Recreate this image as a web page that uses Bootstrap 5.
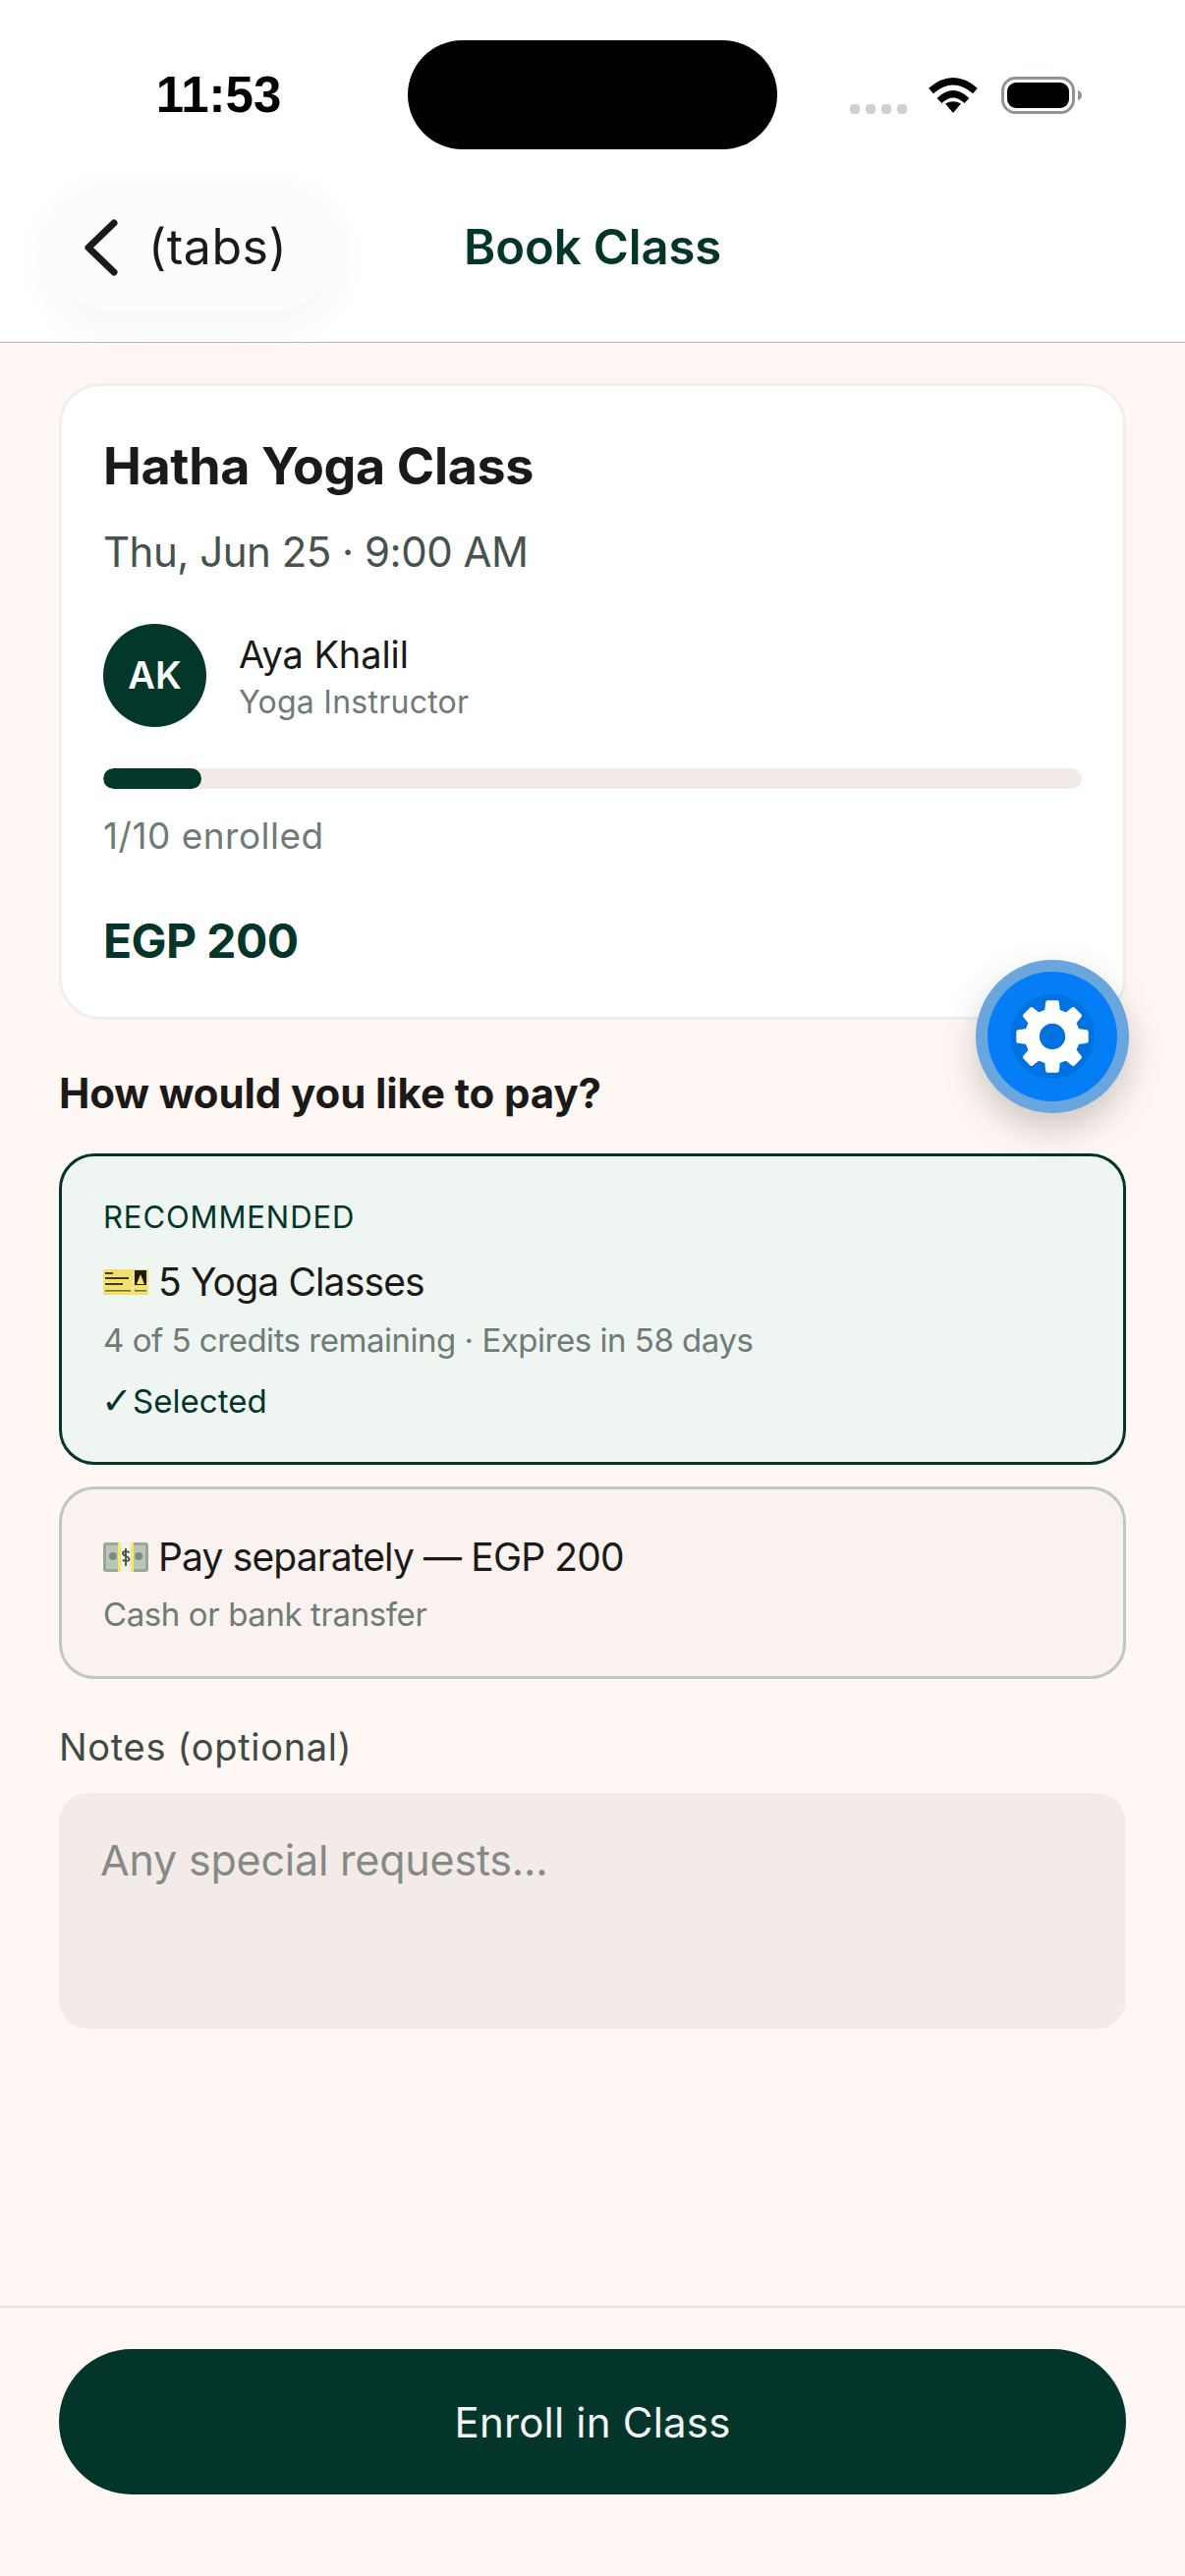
<!DOCTYPE html>
<html lang="en">
<head>
<meta charset="utf-8">
<title>Book Class</title>
<link href="https://cdn.jsdelivr.net/npm/bootstrap@5.3.0/dist/css/bootstrap.min.css" rel="stylesheet">
<style>
html,body{margin:0;width:1206px;height:2622px;overflow:hidden}
body{font-family:Inter,"Liberation Sans",sans-serif;background:#fef7f4;color:#1c1a18}
.screen{width:1206px;height:2622px;position:relative}
.top-head{background:#fff;height:349px;border-bottom:1px solid #b5b5b2}
.status-row{height:186px;padding-top:41px}
.clock{width:415px;padding-left:30px;text-align:center;font:700 51px/111px "Liberation Sans",sans-serif;color:#000}
.island{width:376px;height:111px;border-radius:56px;background:#000}
.status-icons{margin-left:74px;height:111px;padding-top:37px}
.dots{gap:6px;padding-top:28px;margin-right:22px}
.dots i{display:block;width:10px;height:10px;border-radius:4px;background:#cfd1cd}
.nav-row{height:131px}
.back-pill{width:295px;height:131px;margin-left:48px;border-radius:66px;background:#fcfcfc;box-shadow:0 14px 44px rgba(0,0,0,.045);padding-left:37px;gap:30px;font-size:50px;color:#1c1a18;letter-spacing:.5px}
.nav-title{margin-left:129px;font-size:49px;font-weight:600;color:#03352a;letter-spacing:-.1px}
.page-body{padding:41px 60px 0}
.info-card{background:#fff;border:3px solid #eef0ec;border-radius:42px;padding:49px 42px 47px}
.class-name{font-size:52px;line-height:66px;font-weight:700;letter-spacing:-.35px;margin:0}
.class-when{font-size:42px;line-height:56px;margin-top:26px;color:#46524d;letter-spacing:-.5px}
.avatar{width:105px;height:105px;border-radius:50%;background:#03372a;color:#fff;font-size:38px;font-weight:600}
.who{margin-top:45px;gap:33px}
.who-name{font-size:38px;line-height:50px;letter-spacing:-.1px}
.who-role{font-size:32px;line-height:44px;margin-top:2px;margin-bottom:-2px;color:#6f7b76;letter-spacing:.25px}
.seat-bar{height:21px;margin-top:42px;background:#f3ebe8;border-radius:11px}
.seat-bar .progress-bar{background:#03372a;border-radius:11px}
.seat-text{font-size:37px;line-height:46px;margin-top:25px;color:#6f7b76;letter-spacing:.5px}
.price{font-size:48px;line-height:60px;margin-top:54px;font-weight:700;color:#03352a;letter-spacing:-.6px}
.pay-title{font-size:42px;line-height:52px;margin:49px 0 0;font-weight:700;letter-spacing:-.1px}
.pay-card{border:3px solid #bdc8c1;border-radius:36px;background:#f9f2ef;padding:41px 42px}
.pay-card.picked{margin-top:35px;padding-top:42px;padding-bottom:42px;border-color:#03352a;background:#eff5f0}
.pay-card.other{margin-top:22px;padding-top:44px}
.rec-label{font-size:31px;line-height:40px;letter-spacing:.9px;color:#03352a}
.pay-name{font-size:39px;line-height:50px;letter-spacing:-.85px;gap:10px}
.picked .pay-name{margin-top:21px}
.pay-sub{font-size:33px;line-height:44px;color:#6f7b76;letter-spacing:-.48px;margin-top:12px}
.other .pay-sub{margin-top:11px;letter-spacing:-.4px}
.pay-ok{font-size:33px;line-height:40px;color:#03352a;margin-top:20px;letter-spacing:.05px}
.tick{font-family:"DejaVu Sans",sans-serif;font-size:38px;font-weight:700;width:32px;margin-left:-2px}
.notes-label{font-size:38px;line-height:46px;margin-top:46px;color:#3f4a46;display:block;letter-spacing:.7px}
.notes-box.form-control{margin-top:24px;height:240px;border:0;border-radius:30px;background:#f3ebe8;padding:40px 42px;font-size:43px;line-height:56px;resize:none;letter-spacing:-.2px}
.notes-box.form-control::placeholder{color:#858a86;opacity:1}
.foot-bar{position:absolute;left:0;right:0;top:2347px;height:275px;border-top:2px solid #e9e3e0;padding:42px 60px 0}
.enroll.btn{display:block;width:100%;height:148px;border:0;border-radius:74px;background:#03352a;color:#f3f5f2;font-size:42px;letter-spacing:.2px}
.gear-fab{position:absolute;left:993px;top:977px;width:156px;height:156px;border-radius:50%;background:#6aa6de;box-shadow:0 16px 36px rgba(60,60,50,.26)}
.gear-core{width:132px;height:132px;border-radius:50%;background:#057df5}
.gear-dark{width:86px;height:86px;border-radius:50%;background:#0072df}
</style>
</head>
<body>
<div class="screen d-flex flex-column">
  <header class="top-head">
    <div class="status-row d-flex">
      <div class="clock">11:53</div>
      <div class="island"></div>
      <div class="status-icons d-flex align-items-start">
        <div class="dots d-flex"><i></i><i></i><i></i><i></i></div>
        <svg width="50" height="38" viewBox="0 0 50 38" class="me-4"><path d="M2.500 14.500Q25-5 47.500 14.500" fill="none" stroke="#000" stroke-width="7"/><path d="M11 24.500Q25 11 39 24.500" fill="none" stroke="#000" stroke-width="7"/><path d="M17 27.500Q25 23 33 27.500L25 37Z" fill="#000"/></svg>
        <svg width="84" height="38" viewBox="0 0 84 38"><rect x="1.500" y="1.500" width="72" height="35" rx="13" fill="#fff" stroke="#8f9590" stroke-width="3"/><rect x="6" y="6" width="63" height="26" rx="9" fill="#000"/><path d="M78 14q4 1 4 5t-4 5z" fill="#8f9590"/></svg>
      </div>
    </div>
    <div class="nav-row d-flex align-items-center">
      <div class="back-pill d-flex align-items-center">
        <svg width="36" height="60" viewBox="0 0 36 60"><path d="M31 5 5 30l26 25" fill="none" stroke="#1c1a18" stroke-width="7" stroke-linecap="round" stroke-linejoin="round"/></svg>
        <span>(tabs)</span>
      </div>
      <div class="nav-title">Book Class</div>
    </div>
  </header>

  <main class="page-body">
    <section class="info-card">
      <h1 class="class-name">Hatha Yoga Class</h1>
      <div class="class-when">Thu, Jun 25 · 9:00 AM</div>
      <div class="who d-flex align-items-center">
        <div class="avatar d-flex align-items-center justify-content-center">AK</div>
        <div>
          <div class="who-name">Aya Khalil</div>
          <div class="who-role">Yoga Instructor</div>
        </div>
      </div>
      <div class="progress seat-bar"><div class="progress-bar" style="width:10%"></div></div>
      <div class="seat-text">1/10 enrolled</div>
      <div class="price">EGP 200</div>
    </section>

    <h2 class="pay-title">How would you like to pay?</h2>

    <div class="pay-card picked">
      <div class="rec-label">RECOMMENDED</div>
      <div class="pay-name d-flex align-items-center">
        <svg width="46" height="26" viewBox="0 0 46 26"><rect width="46" height="26" fill="#f4e06f"/><rect x="2" y="3" width="8" height="2" fill="#3c3a20"/><rect x="2" y="8" width="24" height="2" fill="#3c3a20"/><rect x="2" y="14" width="18" height="2" fill="#3c3a20"/><rect x="2" y="21" width="26" height="1.500" fill="#6d6a3a"/><rect x="32" y="21" width="12" height="1.500" fill="#6d6a3a"/><rect x="32" y="1" width="12" height="15" fill="#1d1c14"/><path d="M38 5 42 15H34Z" fill="#f4e06f"/><circle cx="30" cy="5" r="1" fill="#eff5f0"/><circle cx="30" cy="12" r="1" fill="#eff5f0"/><circle cx="30" cy="19" r="1" fill="#eff5f0"/></svg>
        <span>5 Yoga Classes</span>
      </div>
      <div class="pay-sub">4 of 5 credits remaining · Expires in 58 days</div>
      <div class="pay-ok d-flex align-items-center"><span class="tick">✓</span><span>Selected</span></div>
    </div>

    <div class="pay-card other">
      <div class="pay-name d-flex align-items-center">
        <svg width="46" height="30" viewBox="0 0 46 30"><rect width="46" height="30" rx="3" fill="#9aa898"/><rect x="3" y="3" width="12" height="24" fill="#bcc6b8"/><rect x="31" y="3" width="12" height="24" fill="#bcc6b8"/><circle cx="10" cy="14" r="4" fill="#7d8c7c"/><circle cx="36" cy="14" r="4" fill="#7d8c7c"/><rect x="15" y="0" width="16" height="30" fill="#f1f1ea"/><rect x="15" y="0" width="3" height="30" fill="#f5e76a"/><rect x="28" y="0" width="3" height="30" fill="#f5e76a"/><path d="M26.500 10.500c-1-2-6.500-2-6.500 .5 0 3.500 6.500 2.500 6.500 6 0 2.500-5.500 2.500-6.500 .5M23 6v18" fill="none" stroke="#3d5148" stroke-width="1.800"/></svg>
        <span>Pay separately — EGP 200</span>
      </div>
      <div class="pay-sub">Cash or bank transfer</div>
    </div>

    <label class="notes-label" for="notes">Notes (optional)</label>
    <textarea id="notes" class="form-control notes-box" placeholder="Any special requests..."></textarea>
  </main>

  <footer class="foot-bar">
    <button type="button" class="btn enroll">Enroll in Class</button>
  </footer>

  <div class="gear-fab d-flex align-items-center justify-content-center">
    <div class="gear-core d-flex align-items-center justify-content-center">
      <div class="gear-dark d-flex align-items-center justify-content-center">
        <svg width="78" height="78" viewBox="-40 -40 80 80"><polygon fill="#fff" stroke="#fff" stroke-width="4" stroke-linejoin="round" points="-6.100,-26.300 -5,-35.600 5,-35.600 6.100,-26.300 14.300,-22.900 21.700,-28.800 28.800,-21.700 22.900,-14.300 26.300,-6.100 35.600,-5 35.600,5 26.300,6.100 22.900,14.300 28.800,21.700 21.700,28.800 14.300,22.900 6.100,26.300 5,35.600 -5,35.600 -6.100,26.300 -14.300,22.900 -21.700,28.800 -28.800,21.700 -22.900,14.300 -26.300,6.100 -35.600,5 -35.600,-5 -26.300,-6.100 -22.900,-14.300 -28.800,-21.700 -21.700,-28.800 -14.300,-22.900"/><circle r="13.500" fill="#0072df"/></svg>
      </div>
    </div>
  </div>
</div>
<script src="https://cdn.jsdelivr.net/npm/bootstrap@5.3.0/dist/js/bootstrap.bundle.min.js"></script>
</body>
</html>
